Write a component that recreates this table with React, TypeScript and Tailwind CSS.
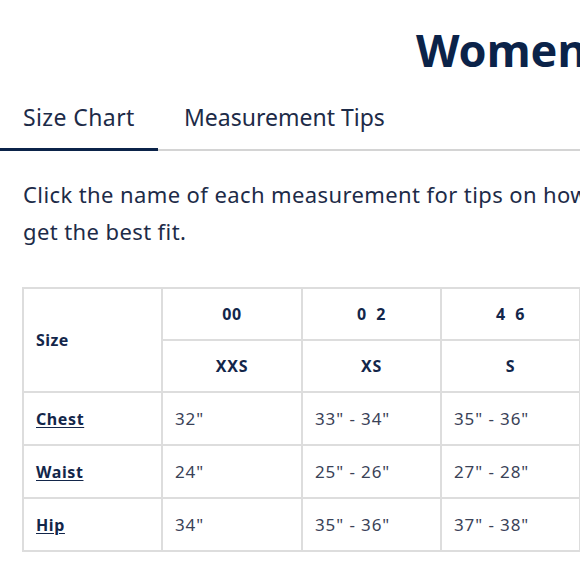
import React from 'react';

const rows = [
  { name: 'Chest', values: ['32"', '33" - 34"', '35" - 36"', '38" - 39"'] },
  { name: 'Waist', values: ['24"', '25" - 26"', '27" - 28"', '30" - 31"'] },
  { name: 'Hip', values: ['34"', '35" - 36"', '37" - 38"', '40" - 41"'] },
];

const numbers = ['00', '0  2', '4  6', '8  10'];
const letters = ['XXS', 'XS', 'S', 'M'];

const cell = 'border-2 border-[#dddddd]';

export default function App() {
  return (
    <div className="w-[580px] h-[580px] overflow-hidden bg-white text-[#13264a]" style={{ fontFamily: '"Noto Sans", Lato, sans-serif' }}>
      <h1 className="pl-[416px] pt-[20px] text-[45px] font-bold leading-[60px] text-[#0b2349] whitespace-nowrap">
        Women's Size Chart
      </h1>

      <div className="mt-[22px] flex border-b-2 border-[#d4d4d4]">
        <div className="w-[158px] -mb-[2px] border-b-[3px] border-[#0b2349] pl-[23px] pb-[16px] text-[23px] leading-[30px] tracking-[0.4px] text-[#1d2b48]">
          Size Chart
        </div>
        <div className="pl-[26px] pb-[16px] text-[23px] leading-[30px] text-[#1d2b48] whitespace-nowrap">
          Measurement Tips
        </div>
      </div>

      <p className="mt-[25px] pl-[23px] w-[700px] text-[22px] leading-[37px] tracking-[0.4px] text-[#1d2b48]">
        <span className="whitespace-nowrap">Click the name of each measurement for tips on how to</span>
        <br />
        get the best fit.
      </p>

      <table className="mt-[37px] ml-[22px] w-[697px] table-fixed border-collapse text-[#13264a]">
        <colgroup>
          <col className="w-[139px]" />
          <col className="w-[140px]" />
          <col className="w-[139px]" />
          <col className="w-[139px]" />
          <col className="w-[139px]" />
        </colgroup>
        <thead>
          <tr className="h-[52px]">
            <th rowSpan={2} className={`${cell} pl-[12px] text-left text-[16px] font-bold tracking-[0.4px]`}>Size</th>
            {numbers.map((n) => (
              <th key={n} className={`${cell} text-center text-[16px] font-bold tracking-[0.6px] whitespace-pre`}>{n}</th>
            ))}
          </tr>
          <tr className="h-[52px]">
            {letters.map((l) => (
              <th key={l} className={`${cell} text-center text-[16px] font-bold tracking-[0.8px]`}>{l}</th>
            ))}
          </tr>
        </thead>
        <tbody>
          {rows.map((r) => (
            <tr key={r.name} className="h-[53px]">
              <td className={`${cell} pl-[12px] text-[16px] font-bold tracking-[0.6px] underline underline-offset-2`}>{r.name}</td>
              {r.values.map((v, i) => (
                <td key={i} className={`${cell} pl-[12px] text-[17px] tracking-[0.9px] text-[#3a4257]`}>{v}</td>
              ))}
            </tr>
          ))}
        </tbody>
      </table>
    </div>
  );
}
